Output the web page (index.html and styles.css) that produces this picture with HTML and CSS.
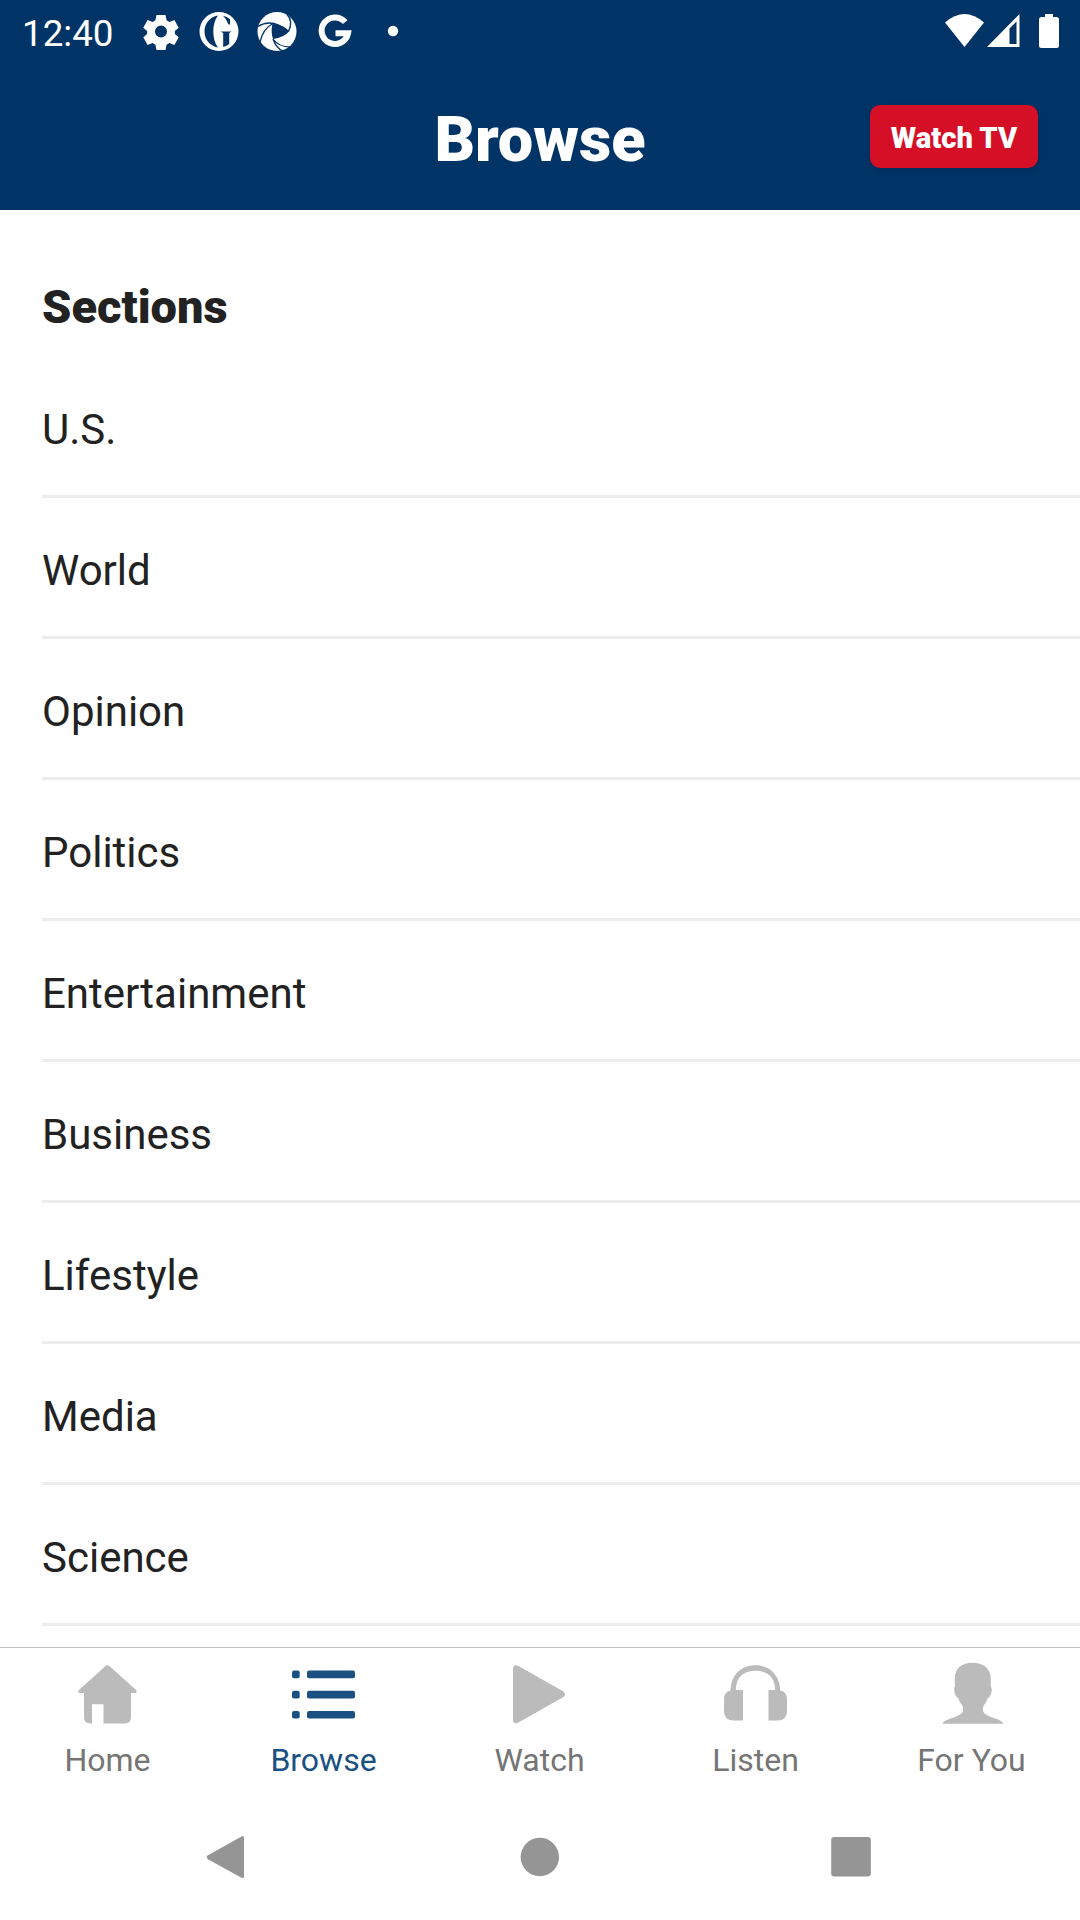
FILE: index.html
```html
<!DOCTYPE html>
<html lang="en">
<head>
<meta charset="utf-8">
<title>Browse</title>
<link rel="stylesheet" href="styles.css">
</head>
<body>
<div class="screen">
  <div class="status-bar">
    <span class="clock">12:40</span>
    <div class="notifications">
      <svg class="status-icon" viewBox="0 0 42 42"><path fill-rule="evenodd" d="M16.500 4h9l1.100 5.200 2.800 1.700 5-1.800 4.300 7.600-3.800 3.300v3l3.800 3.300-4.300 7.600-5-1.800-2.800 1.700-1.100 5.200h-9l-1.100-5.200-2.800-1.700-5 1.800-4.300-7.600 3.800-3.300v-3l-3.800-3.300 4.300-7.600 5 1.800 2.800-1.700zM21 14.500a6 6 0 1 0 0 12 6 6 0 0 0 0-12z"/></svg>
      <svg class="status-icon" viewBox="0 0 42 42"><path fill-rule="evenodd" d="M21 1a19.500 19.500 0 1 0 0 39 19.500 19.500 0 0 0 0-39zM20 4.500C11.500 6 6.500 13 6.500 20.500s5 14.300 13.500 16C16.800 32.500 15.300 26.500 15.300 20.500s1.500-12 4.700-16zM25 4.800q3.500 3 5.500 8.700H32V8.200Q29 5.800 25 4.800zM22.500 20.500l2.700 1.500v14q3.500-1 6-3V22l2.300-1.500z"/></svg>
      <svg class="status-icon" viewBox="0 0 42 42"><circle cx="21" cy="20.500" r="19.500"/><path class="shutter" d="M16.500 12.800Q28 14 33 20.500 28 26.500 17 28 14.500 20 16.500 12.800z"/><path class="blade" d="M2 15.500Q16 6.500 32.500 20.500M31 3.500Q37.500 10 32.500 20.500M17 28Q23 36.500 36 36M17 28Q20 37 27 40M16.500 12.800Q7 18 4 31"/></svg>
      <svg class="status-icon" viewBox="0 0 42 42"><path class="g-mark" d="M31.200 11.200A13.300 13.300 0 1 0 34 22.300H21.500"/></svg>
      <svg class="status-icon" viewBox="0 0 42 42"><circle cx="21" cy="20" r="5.200"/></svg>
    </div>
    <div class="system">
      <svg class="wifi" viewBox="0 0 39 34"><path d="M0 8.500Q19.500-8.500 39 8.500L19.500 33z"/></svg>
      <svg class="signal" viewBox="0 0 33 34"><path fill-rule="evenodd" d="M0 33L32.500 0v33zM22.500 14.500V30H29.500V7.500z"/></svg>
      <svg class="battery" viewBox="0 0 20 34"><path d="M6 0h8v3h3.500Q20 3 20 5.500v26q0 2.500-2.500 2.500h-15Q0 34 0 31.500v-26Q0 3 2.500 3H6z"/></svg>
    </div>
  </div>
  <header class="app-bar">
    <h1 class="title">Browse</h1>
    <button class="watch-tv">Watch TV</button>
  </header>
  <main class="sections">
    <h2 class="heading">Sections</h2>
    <ul class="list">
      <li class="row">U.S.</li>
      <li class="row">World</li>
      <li class="row">Opinion</li>
      <li class="row">Politics</li>
      <li class="row">Entertainment</li>
      <li class="row">Business</li>
      <li class="row">Lifestyle</li>
      <li class="row">Media</li>
      <li class="row">Science</li>
    </ul>
  </main>
  <nav class="tabs">
    <a class="tab"><svg class="tab-icon" viewBox="0 0 72 72"><path d="M33.800 9.800q1.700-1.300 3.400 0L64.300 34.300q1.200 2.700-1 2.700H59V61q0 6.500-6.500 6.500H31.500V48.200H20V67.500H18.500Q12 67.500 12 61V37H7.700q-2.200 0-1-2.700z"/></svg><span class="tab-label">Home</span></a>
    <a class="tab active"><svg class="tab-icon" viewBox="0 0 72 72"><g><rect x="4" y="14.500" width="7.700" height="7.700" rx="2"/><rect x="19" y="14.500" width="48" height="7.700" rx="2"/><rect x="4" y="34.700" width="7.700" height="7.700" rx="2"/><rect x="19" y="34.700" width="48" height="7.700" rx="2"/><rect x="4" y="54.900" width="7.700" height="7.700" rx="2"/><rect x="19" y="54.900" width="48" height="7.700" rx="2"/></g></svg><span class="tab-label">Browse</span></a>
    <a class="tab"><svg class="tab-icon" viewBox="0 0 72 72"><path d="M9 12.500q.500-4.500 5-2.800L59.500 35.500q3 2.800 0 5.500L14 66.700q-4.500 1.800-5-2.800z"/></svg><span class="tab-label">Watch</span></a>
    <a class="tab"><svg class="tab-icon" viewBox="0 0 72 72"><path d="M10.500 34.500C11 19 21 9.200 35.300 9.200S59.800 19 60.300 34.500Q67 36 67 43v12q0 9.500-9.500 9.500h-9V34h6.700C55 21 47 14.800 35.300 14.800S16 21 15.800 34H23v30.500h-9.500Q4 64.500 4 55V43q0-7 6.500-8.500z"/></svg><span class="tab-label">Listen</span></a>
    <a class="tab"><svg class="tab-icon" viewBox="0 0 72 72"><path d="M36.500 6.800C48 6.800 54.800 13 54.800 23v8q1.500 1 .7 5-.700 4.500-3.800 6.300c-1 3-2.700 5.500-4.200 7.700-1.300 4-.500 6.500 2.500 8.500 5 3.500 17.500 5.500 17.200 9.300H6.700c-.3-3.800 12.300-5.800 17.300-9.300 3-2 3.800-4.500 2.500-8.500-1.500-2.200-3.200-4.700-4.200-7.700-3.100-1.800-3.800-6.300-3.800-6.300-.700-4-.300-5 .300-5v-8C18.800 13 25 6.800 36.500 6.800z"/></svg><span class="tab-label">For You</span></a>
  </nav>
  <div class="system-nav">
    <svg class="nav-key" viewBox="0 0 48 48"><path d="M38.500 3.500q2.500-1.200 2.500 1.200V43.500q0 2.500-2.500 1.200L5 26.200q-2.500-2 0-4z"/></svg>
    <svg class="nav-key" viewBox="0 0 48 48"><circle cx="24.800" cy="24" r="19.200"/></svg>
    <svg class="nav-key" viewBox="0 0 48 48"><rect x="4.200" y="4" width="39.600" height="39.600" rx="3"/></svg>
  </div>
</div>
</body>
</html>
```
FILE: styles.css
```css
* { box-sizing: border-box; }
body { margin: 0; background: #fff; font-family: Roboto, "Liberation Sans", sans-serif; color: #222; }
svg { display: block; flex: none; }
.screen { width: 1080px; height: 1920px; display: flex; flex-direction: column; overflow: hidden; }

.status-bar { height: 63px; flex: none; display: flex; align-items: flex-start; background: #003366; color: #fff; fill: #fff; padding: 0 21px 0 22px; }
.clock { width: 118px; font-size: 36.75px; line-height: 67px; }
.notifications { display: flex; gap: 16px; padding-top: 11px; }
.status-icon { width: 42px; height: 42px; }
.shutter { fill: #003366; }
.blade { fill: none; stroke: #003366; stroke-width: 1.3; }
.g-mark { fill: none; stroke: #fff; stroke-width: 6; }
.system { display: flex; margin-left: auto; padding-top: 14px; }
.wifi { width: 39px; height: 34px; }
.signal { width: 33px; height: 34px; margin: 0 19px 0 3px; }
.battery { width: 20px; height: 34px; }

.app-bar { height: 147px; flex: none; display: grid; grid-template-columns: 1fr auto 1fr; align-items: start; padding: 42px 42px 0; background: #003366; color: #fff; }
.title { grid-column: 2; margin: 0; font-size: 63px; line-height: 69px; font-weight: 900; }
.watch-tv { justify-self: end; width: 168px; height: 63px; padding: 4px 0 0; border: 0; border-radius: 10px; background: #d50f26; color: #fff; font: 900 29.2px/1 Roboto, sans-serif; white-space: nowrap; box-shadow: 0 2px 5px rgba(0, 0, 0, .12); }

.sections { flex: 1; min-height: 0; overflow: hidden; padding: 67px 0 0 42px; }
.heading { margin: 0; height: 80px; font-size: 47px; line-height: 60px; font-weight: 900; }
.list { margin: 0; padding: 0; list-style: none; }
.row { height: 141px; padding-top: 7px; border-bottom: 3px solid #ededed; font-size: 42px; line-height: 132px; }

.tabs { height: 158px; flex: none; display: grid; grid-template-columns: repeat(5, 1fr); border-top: 1px solid #c4c4c4; padding-top: 8px; }
.tab { display: flex; flex-direction: column; align-items: center; fill: #bbb; color: #757575; }
.tab-icon { width: 72px; height: 72px; }
.tab-label { margin-right: 1px; font-size: 32px; line-height: 64px; }
.active { fill: #1b5082; color: #1b5082; }

.system-nav { height: 115px; flex: none; display: flex; align-items: flex-start; justify-content: space-between; padding: 28px 205px 0 203px; fill: #959595; }
.nav-key { width: 48px; height: 48px; }
```
